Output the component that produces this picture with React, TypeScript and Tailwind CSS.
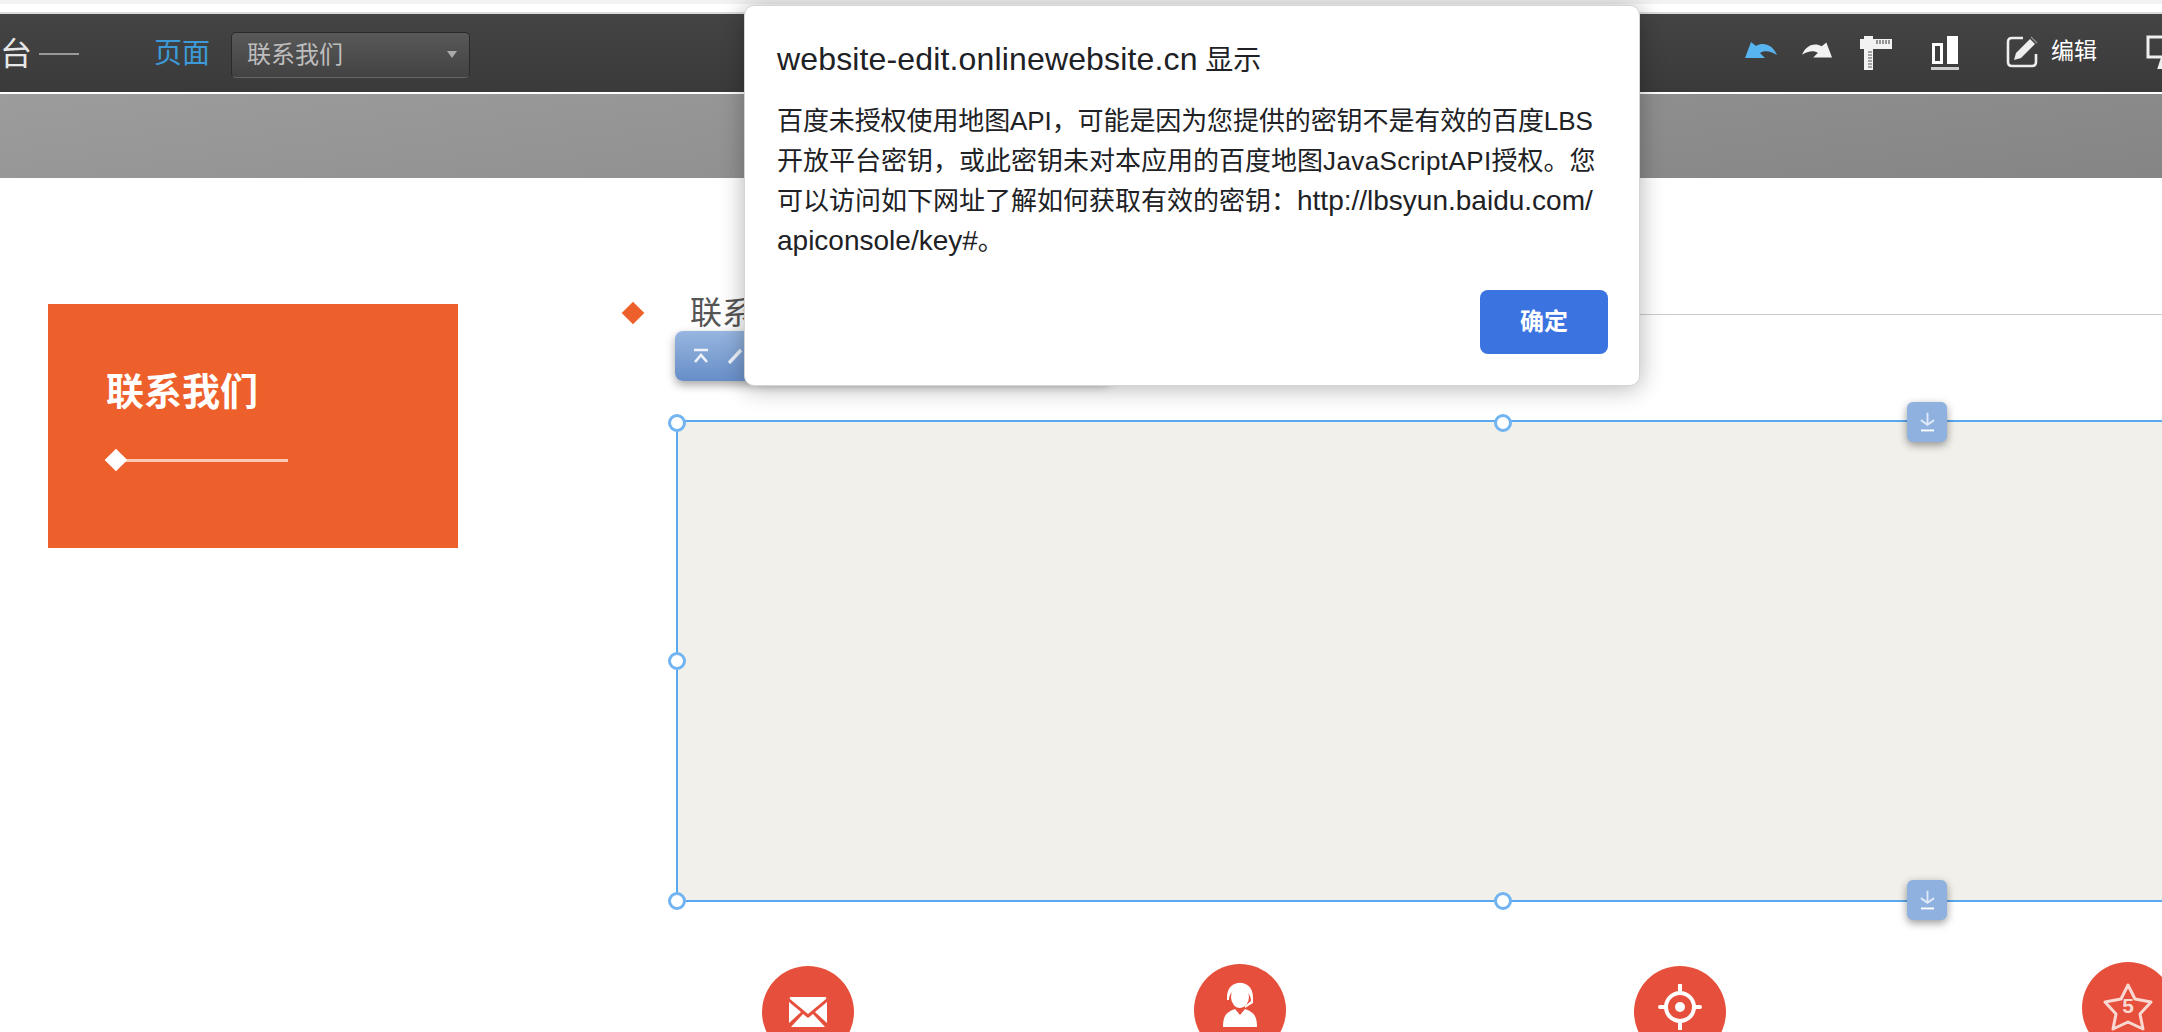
import React from 'react';

const FONT = "font-['Liberation_Sans','Noto_Sans_CJK_SC',sans-serif]";

function UndoIcon({ className }: { className?: string }) {
  return (
    <svg viewBox="0 0 32 16" className={className} fill="currentColor">
      <path d="M0 16 L6 0 L11 4 C18 0 27 2 32 13 C26 9 19 8 15 11 L20 16 Z" />
    </svg>
  );
}

function RulerIcon() {
  return (
    <svg viewBox="0 0 32 34" className="w-[32px] h-[34px]">
      <path d="M4 0 H13 V3 H32 V13 H13 V34 H4 V13 H0 V3 H4 Z" fill="#f2f2f2" />
      <path d="M17 4 V8 M20 4 V8 M23 4 V8 M26 4 V8 M29 4 V8 M8 16 H12 M8 19 H12 M8 22 H12 M8 25 H12 M8 28 H12 M8 31 H12" stroke="#555" strokeWidth="1.2" fill="none" />
    </svg>
  );
}

function BarsIcon() {
  return (
    <svg viewBox="0 0 28 34" className="w-[28px] h-[34px]">
      <rect x="16" y="0" width="11" height="28" fill="#fff" />
      <rect x="2.5" y="8.5" width="8" height="18" fill="none" stroke="#fff" strokeWidth="3" />
      <rect x="0" y="31" width="28" height="3" fill="#ccc" />
    </svg>
  );
}

function EditIcon() {
  return (
    <svg viewBox="0 0 32 32" className="w-[32px] h-[32px]" fill="none">
      <path d="M17 2 H6 Q2 2 2 6 V26 Q2 30 6 30 H26 Q30 30 30 26 V18" stroke="#eee" strokeWidth="2.6" />
      <path d="M8 24 L10 17 L24 3 L29 8 L15 22 Z" fill="#eee" />
      <path d="M25 1 L31 7" stroke="#999" strokeWidth="1.2" />
    </svg>
  );
}

function MonitorIcon() {
  return (
    <svg viewBox="0 0 34 34" className="w-[34px] h-[34px]" fill="none">
      <path d="M2 2 H32 V22 H2 Z" stroke="#eee" strokeWidth="3" />
      <path d="M17 23 L14 32 H26" stroke="#eee" strokeWidth="4" />
    </svg>
  );
}

function DownloadHandle({ className }: { className: string }) {
  return (
    <div className={`absolute w-[40px] h-[40px] rounded-[6px] bg-[#8eb1df] shadow-[0_3px_8px_rgba(0,0,0,0.4)] flex items-center justify-center ${className}`}>
      <svg viewBox="0 0 16 20" className="w-[15px] h-[20px]" fill="none" stroke="#dfe9f7" strokeWidth="2">
        <path d="M8 0 V13 M1 8 L8 13 L15 8" />
        <path d="M1 19 H15" stroke="#fff" />
      </svg>
    </div>
  );
}

function DotHandle({ className }: { className: string }) {
  return <div className={`absolute w-[18px] h-[18px] rounded-full bg-white border-[3px] border-[#72b4f2] ${className}`} />;
}

function Circle({ className, children }: { className?: string; children: React.ReactNode }) {
  return (
    <div className={`w-[92px] h-[92px] shrink-0 rounded-full bg-[#e64f3c] flex items-center justify-center ${className ?? ''}`}>
      {children}
    </div>
  );
}

export default function App() {
  return (
    <div lang="zh-CN" className={`relative w-[2162px] h-[1032px] overflow-hidden bg-white ${FONT}`}>
      <div className="h-[4px] bg-[#f1f2f4]" />
      <div className="h-[8px] bg-white" />
      <div className="h-[2px] bg-[#dcdcdc]" />

      {/* dark editor toolbar */}
      <div className="h-[78px] flex items-center bg-[linear-gradient(180deg,#444444,#3a3a3a)] text-white">
        <span className="mt-[2px] text-[32px] text-[#e8e8e8]">台</span>
        <div className="ml-[7px] mt-[2px] w-[40px] h-[2px] bg-[#999]" />
        <span className="ml-[75px] mt-[2px] text-[28px] text-[#3c9ad8]">页面</span>
        <div className="ml-[21px] mt-[3px] w-[239px] h-[46px] rounded-[5px] border border-[#2a2a2a] border-b-[#666] bg-[linear-gradient(180deg,#585858,#424242)] flex items-center justify-between pl-[15px] pr-[12px]">
          <span className="text-[24px] text-[#bdbdbd]">联系我们</span>
          <div className="w-0 h-0 border-x-[5px] border-x-transparent border-t-[7px] border-t-[#aaa]" />
        </div>

        <div className="ml-auto mr-[-18px] flex items-center">
          <UndoIcon className="w-[32px] h-[16px] mb-[6px] text-[#58b4ee]" />
          <UndoIcon className="w-[30px] h-[16px] mb-[6px] ml-[25px] text-[#f2f2f2] -scale-x-100" />
          <div className="ml-[28px]"><RulerIcon /></div>
          <div className="ml-[39px]"><BarsIcon /></div>
          <div className="ml-[47px] mb-[2px]"><EditIcon /></div>
          <span className="ml-[13px] mb-[3px] text-[23px] text-white">编辑</span>
          <div className="ml-[49px] mb-[2px]"><MonitorIcon /></div>
        </div>
      </div>

      <div className="h-[2px] bg-white" />
      <div className="h-[84px] bg-[linear-gradient(172deg,#9c9c9c,#858585)]" />

      {/* page content */}
      <div className="flex items-start pl-[48px] pt-[117px]">
        <div className="mt-[9px] w-[410px] h-[244px] shrink-0 bg-[#ee602b] pl-[58px] pt-[66px]">
          <h2 className="text-[38px] leading-[44px] font-bold text-white">联系我们</h2>
          <div className="mt-[38px] ml-[2px] flex items-center">
            <div className="w-[16px] h-[16px] rotate-45 bg-white" />
            <div className="-ml-[1px] w-[165px] h-[3px] bg-[#fbc9b2]" />
          </div>
        </div>

        <div className="ml-[164px] flex-1 min-w-0">
          <div className="flex items-center h-[36px]">
            <div className="w-[16px] h-[16px] ml-[3px] rotate-45 bg-[#ee602b]" />
            <span className="ml-[49px] text-[32px] text-[#555] shrink-0">联系我们</span>
            <div className="ml-[16px] flex-1 h-[1px] mt-[2px] bg-[#ccc]" />
          </div>

          <div className="relative mt-[89px] ml-[54px] -mr-[20px] h-[482px] border-2 border-r-0 border-[#5aa9f0] bg-[#f1f0eb]">
            {/* floating block toolbar */}
            <div className="absolute left-[-3px] top-[-91px] w-[436px] h-[50px] rounded-[8px] bg-[linear-gradient(180deg,#97b6e0,#678ec8)] shadow-[0_4px_10px_rgba(0,0,0,0.35)] flex items-center pl-[18px] gap-[18px]">
              <svg viewBox="0 0 16 16" className="w-[16px] h-[16px]" fill="none" stroke="#eef3fb" strokeWidth="2.6">
                <path d="M1 2 H15 M2 14 L8 7 L14 14" />
              </svg>
              <svg viewBox="0 0 16 16" className="w-[16px] h-[16px]" fill="none" stroke="#eef3fb" strokeWidth="3.4">
                <path d="M2 15 L14 2" />
              </svg>
            </div>
            <DotHandle className="left-[-10px] top-[-8px]" />
            <DotHandle className="left-[816px] top-[-8px]" />
            <DotHandle className="left-[-10px] top-[230px]" />
            <DotHandle className="left-[-10px] top-[470px]" />
            <DotHandle className="left-[816px] top-[470px]" />
            <DownloadHandle className="left-[1229px] top-[-20px]" />
            <DownloadHandle className="left-[1229px] top-[458px]" />
          </div>

          <div className="mt-[60px] ml-[140px] flex items-start">
            <Circle className="mt-[4px]">
              <svg viewBox="0 0 38 30" className="w-[38px] h-[30px]">
                <path d="M2 0 H36 Q38 0 37 2 L19 17 L1 2 Q0 0 2 0 Z" fill="#fff" />
                <path d="M0 5 L12 15 L0 26 Z M38 5 L26 15 L38 26 Z" fill="#fff" />
                <path d="M2 30 L14 17 L19 21 L24 17 L36 30 Z" fill="#fff" />
              </svg>
            </Circle>
            <Circle className="ml-[340px] mt-[2px]">
              <svg viewBox="0 0 38 46" className="w-[38px] h-[46px] mb-[13px]">
                <path d="M10 16 a9 11 0 0 1 18 0 a9 11 0 0 1 -18 0 Z" fill="#fff" />
                <path d="M6 16 C6 -3 32 -3 32 16 V22 L24 27 V25 L30 20 C30 5 8 5 8 19 H6 Z" fill="#fff" />
                <path d="M2 46 C2 34 6 31 14 28 L19 34 L24 28 C32 31 36 34 36 46 Z" fill="#fff" />
              </svg>
            </Circle>
            <Circle className="ml-[348px] mt-[4px]">
              <svg viewBox="0 0 44 46" className="w-[44px] h-[46px] mb-[10px]" fill="none" stroke="#fff">
                <circle cx="22" cy="23" r="14" strokeWidth="4" />
                <circle cx="22" cy="23" r="5" fill="#fff" strokeWidth="0" />
                <path d="M22 1 V8 M22 38 V45 M2 23 H8 M36 23 H42" strokeWidth="4" strokeLinecap="round" />
              </svg>
            </Circle>
            <Circle className="ml-[356px] relative">
              <svg viewBox="0 0 50 48" className="w-[50px] h-[48px] mb-[3px]" fill="none" stroke="#fbd9d3" strokeWidth="3" strokeLinejoin="round">
                <path d="M25 2 L32 16 L48 19 L37 31 L40 46 L25 39 L10 46 L13 31 L2 19 L18 16 Z" />
              </svg>
              <span className="absolute left-0 right-0 top-[32px] text-center text-[21px] leading-[24px] font-bold text-[#fbd9d3]">5</span>
            </Circle>
          </div>
        </div>
      </div>

      {/* browser alert */}
      <div className="absolute left-[744px] top-[5px] w-[896px] h-[381px] rounded-[10px] border border-[#d4d4d4] bg-white shadow-[0_2px_24px_rgba(0,0,0,0.3)] text-[#202124]">
        <div className="pl-[32px] pt-[33px] text-[28px] leading-[40px] whitespace-nowrap">
          <span className="text-[32px] tracking-[0.15px]">website-edit.onlinewebsite.cn</span> 显示
        </div>
        <div className="pl-[32px] pt-[20px] text-[26px] leading-[40px] whitespace-nowrap">
          <div className="tracking-[-0.1px]">百度未授权使用地图API，可能是因为您提供的密钥不是有效的百度LBS</div>
          <div>开放平台密钥，或此密钥未对本应用的百度地图<span className="tracking-[0.4px]">JavaScriptAPI</span>授权。您</div>
          <div>可以访问如下网址了解如何获取有效的密钥：<span className="text-[28px]">http://lbsyun.baidu.com/</span></div>
          <div><span className="text-[28px]">apiconsole/key#</span>。</div>
        </div>
        <button className="absolute left-[735px] top-[284px] w-[128px] h-[64px] rounded-[8px] bg-[#3b73e0] text-white text-[24px] font-bold">确定</button>
      </div>
    </div>
  );
}
